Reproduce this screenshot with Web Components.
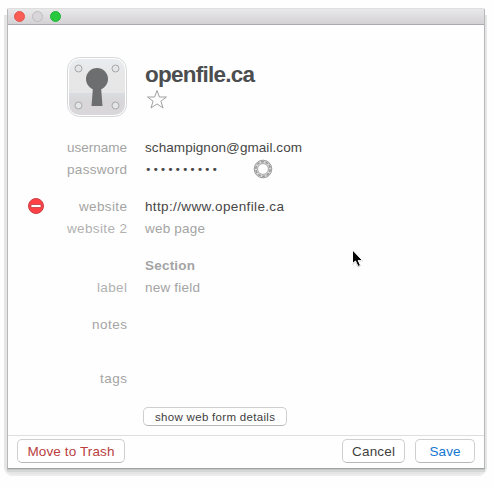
<!DOCTYPE html>
<html lang="en"><head><meta charset="utf-8"><title>openfile.ca</title>
<style>html,body{margin:0;height:100%;background:#fefefe;overflow:hidden}body{font:13.5px/22px "Liberation Sans",Arial,sans-serif;color:#464646}</style></head>
<body><vault-window></vault-window>
<script>
const define=(name,html,setup)=>customElements.define(name,class extends HTMLElement{
  connectedCallback(){
    if(this.shadowRoot)return;
    this.attachShadow({mode:'open'}).innerHTML=html;
    if(setup)setup(this,this.shadowRoot);
  }
});

// Text run whose letter spacing is spread to reach the width in its "w" attribute.
define('fit-text',`<style>:host{display:inline-block;white-space:nowrap}span{display:inline-block}</style><span><slot></slot></span>`,(el,root)=>{
  const s=root.querySelector('span'),w=+el.getAttribute('w'),n=el.textContent.length;
  if(w){const ls=(w-s.getBoundingClientRect().width)/(n-1);s.style.letterSpacing=ls+'px';s.style.marginRight=-ls+'px'}
});

define('title-bar',`<style>
:host{display:flex;align-items:center;gap:7px;height:16px;box-sizing:border-box;padding:0 0 1px 6px;background:linear-gradient(#e9e8e9,#d3d1d4);border-bottom:1px solid #aba8b0}
i{width:11px;height:11px;border-radius:50%;box-sizing:border-box;border:1px solid #bebcbf;background:#d8d6d8}
.r{background:#fb5d55;border-color:#e5554e}.g{background:#28c93f;border-color:#24b338}
</style><i class="r"></i><i></i><i class="g"></i>`);

define('lock-icon',`<style>:host{display:block;width:62px;height:62px}svg{display:block}</style>
<svg width="62" height="62" viewBox="0 0 62 62"><defs><linearGradient id="a" x2="0" y2="1"><stop stop-color="#e9edf1"/><stop offset=".25" stop-color="#e7e7e8"/><stop offset=".6" stop-color="#e6e6e7"/><stop offset=".61" stop-color="#d9dde1"/><stop offset=".75" stop-color="#d8d6d9"/><stop offset="1" stop-color="#d9d7da"/></linearGradient></defs>
<rect x="1.500" y="1.500" width="59" height="59" rx="12" fill="#fff" stroke="#d5d7d8"/><rect x="3" y="3" width="56" height="56" rx="10.500" fill="url(#a)"/>
<g fill="#e4e5e6" stroke="#a5a8aa"><circle cx="12.500" cy="12.500" r="3.500"/><circle cx="49.500" cy="12.500" r="3.500"/><circle cx="12.500" cy="49.500" r="3.500"/><circle cx="49.500" cy="49.500" r="3.500"/></g>
<circle cx="31" cy="23" r="11" fill="#6d6e70"/><path d="M27 31H35L36.500 50H25.500Z" fill="#6d6e70"/></svg>`);

define('star-icon',`<style>:host,svg{display:block}</style><svg width="22" height="21" viewBox="0 0 22 21"><path d="M11 1.500L13.400 8H20.500L14.900 12.200L17 19L11 14.900L5 19L7.100 12.200L1.500 8H8.600Z" fill="#fefefe" stroke="#a0a0a0"/></svg>`);

define('dial-icon',`<style>:host{display:block;margin-top:-2px}svg{display:block}</style><svg width="20" height="20" viewBox="0 0 20 20" fill="none"><circle cx="10" cy="10" r="7.200" stroke="#dcdcdc" stroke-width="4"/><circle cx="10" cy="10" r="8.800" stroke="#a1a1a1"/><circle cx="10" cy="10" r="7.200" stroke="#999" stroke-width="1.500" stroke-dasharray="3.100 1.424"/><circle cx="10" cy="10" r="5.400" stroke="#a3a3a3" stroke-width=".9"/></svg>`);

define('remove-icon',`<style>:host{display:block;margin-top:-2px}svg{display:block}</style><svg width="18" height="18" viewBox="0 0 18 18"><circle cx="9" cy="9" r="7.500" fill="#ff4046" stroke="#c94044"/><rect x="4" y="7.500" width="10" height="3" rx=".8" fill="#fff" stroke="#b93e41" stroke-width=".8"/></svg>`);

define('pointer-icon',`<style>:host,svg{display:block}</style><svg width="14" height="20" viewBox="0 0 14 20"><path d="M1.500 1V14.500L4.500 12L7 17.500L9.500 16.400L7.200 11.500H11.500Z" fill="#050505" stroke="#fff"/><path d="M8 11.900H11.700M9.700 16.700L7 18.100L4.800 13.300L1.200 15.500" fill="none" stroke="#c5c5c5" stroke-width=".7"/></svg>`);

define('field-row',`<style>
:host{display:grid;grid-template-columns:12px 16px 83px 1fr;align-items:center;height:22px;padding-left:8px;color:#464646}
.icon{display:block;grid-column:2;width:18px;justify-self:center}.label{display:block;grid-column:3;text-align:right;color:#a4a4a4}.value{display:flex;align-items:center;grid-column:4;padding-left:18px}
:host([dim]){color:#a4a4a4}:host([faint]) .label{color:#b1b1b1}
</style><span class="icon"><slot name="icon"></slot></span><span class="label"><slot name="label"></slot></span><span class="value"><slot></slot></span>`);

define('password-dots',`<style>:host{display:flex;width:108px;height:20px;align-items:center}span{font:11px/20px "DejaVu Sans",sans-serif;color:#464646}</style><span><fit-text w="73">••••••••••</fit-text></span>`);

define('push-button',`<style>:host{display:block}button{font:inherit;color:inherit;display:flex;align-items:center;justify-content:center;width:100%;height:100%;padding:0;box-sizing:border-box;background:#fff;border:1px solid #cfcfcf;border-bottom-color:#b7b7b7;border-radius:5px}slot{display:block;padding-top:1px}</style><button><slot></slot></button>`);

define('vault-window',`<style>
:host{display:block;padding:8px 9px 19px 7px;height:488px;box-sizing:border-box;position:relative;isolation:isolate}
:host::before{content:"";position:absolute;z-index:-1;left:4px;right:7px;top:15px;bottom:12px;background:#e5e5e5;border-radius:0 0 9px 9px;box-shadow:inset 0 -2px 0 #ececec}
.win{display:flex;flex-direction:column;height:461px;box-sizing:border-box;border:1px solid #b7b8b9;border-top-color:#dedede;border-bottom-color:#9fa2a3;background:#fefefe;box-shadow:0 1px 0 #c5c7c7,0 3px 0 #d5d6d6;border-radius:2px 2px 0 0}
.main{flex:1;min-height:0}.head{display:flex;padding:31px 0 0 58px;height:112px;box-sizing:border-box}
.name{padding-left:17px}.title{display:block;font-size:22.5px;font-weight:bold;line-height:28px;padding-top:5px;height:27px;color:#4c4d4f}.name star-icon{margin-top:1px;margin-left:1px}
.gap{height:15px}.more{display:flex;padding:17px 0 0 135px}.more push-button{width:144px;height:19px;font-size:11.5px;line-height:15px;color:#3d3d3d}
footer{height:33px;box-sizing:border-box;border-top:1px solid #dedede;padding:3px 9px 0;display:flex}
footer push-button{height:24px}.trash{width:108px;color:#b9403e}.cancel{width:63px;margin-left:auto;margin-right:10px;color:#3f3f3f}.save{width:60px;color:#1577d0}
pointer-icon{position:absolute;left:351px;top:249px}
</style>
<div class="win"><title-bar></title-bar><div class="main">
<div class="head"><lock-icon></lock-icon><div class="name"><span class="title"><fit-text w="110">openfile.ca</fit-text></span><star-icon></star-icon></div></div>
<field-row><fit-text slot="label" w="60">username</fit-text><fit-text w="157">schampignon@gmail.com</fit-text></field-row>
<field-row><fit-text slot="label" w="60">password</fit-text><password-dots></password-dots><dial-icon></dial-icon></field-row>
<div class="gap"></div>
<field-row><remove-icon slot="icon"></remove-icon><fit-text slot="label" w="48">website</fit-text><fit-text w="139">http://www.openfile.ca</fit-text></field-row>
<field-row dim faint><fit-text slot="label" w="60">website 2</fit-text><fit-text w="60">web page</fit-text></field-row>
<div class="gap"></div>
<field-row dim><b><fit-text w="50">Section</fit-text></b></field-row>
<field-row dim faint><fit-text slot="label" w="30">label</fit-text><fit-text w="55">new field</fit-text></field-row>
<div class="gap"></div>
<field-row><fit-text slot="label" w="35">notes</fit-text></field-row>
<div class="gap"></div><div class="gap" style="height:17px"></div>
<field-row><fit-text slot="label" w="27">tags</fit-text></field-row>
<div class="more"><push-button><fit-text w="120">show web form details</fit-text></push-button></div>
</div><footer><push-button class="trash"><fit-text w="87">Move to Trash</fit-text></push-button><push-button class="cancel"><fit-text w="43">Cancel</fit-text></push-button><push-button class="save"><fit-text w="31">Save</fit-text></push-button></footer></div>
<pointer-icon></pointer-icon>`);
</script></body></html>
